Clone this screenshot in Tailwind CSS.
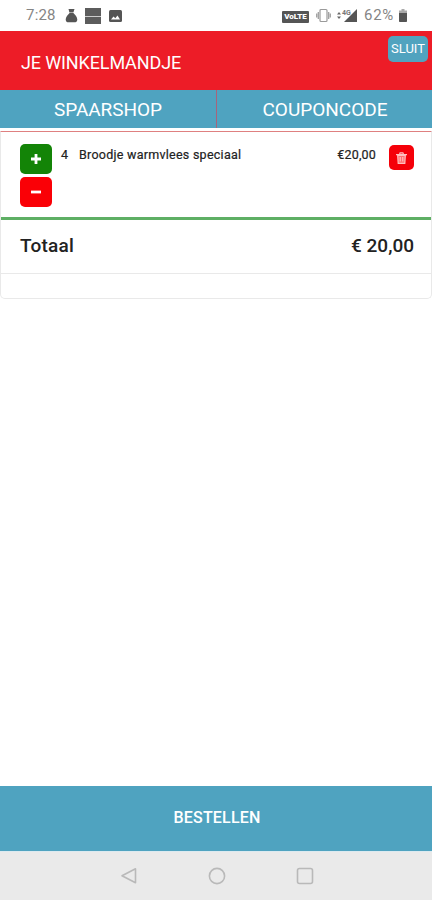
<!DOCTYPE html>
<html lang="nl">
<head>
<meta charset="utf-8">
<meta name="viewport" content="width=device-width, initial-scale=1">
<title>Je winkelmandje</title>
<script src="https://cdn.jsdelivr.net/npm/@tailwindcss/browser@4"></script>
</head>
<body class="bg-white">
<div class="w-[432px] h-[900px] flex flex-col overflow-hidden bg-white font-['Roboto',sans-serif] text-[#222]">
  <!-- Status bar -->
  <div class="h-[31px] shrink-0 flex items-center pl-[26px] pr-[24px] text-[#858585]">
    <span class="w-[39px] text-[15px] leading-none tracking-[0.2px]">7:28</span>
    <svg class="w-[13px] h-[15px]" viewBox="0 0 13 15" fill="#555"><path d="M3.500 1h6L8.400 4.400h-4zM4.600 5h3.800c1.800 1.800 3.900 4.200 3.900 6.400 0 2-1.200 2.900-3 2.900H3.700c-1.800 0-3-.9-3-2.900C.7 9.200 2.800 6.800 4.600 5z"/></svg>
    <svg class="ml-[7px] w-[16px] h-[16px]" viewBox="0 0 16 16"><path fill="#5c5c5c" d="M0 0h16v16H0z"/><path d="M0 8.500h16" stroke="#ccc" stroke-width="1"/></svg>
    <svg class="ml-[8px] mt-px w-[13px] h-[12px]" viewBox="0 0 13 12"><rect width="13" height="12" rx="1.500" fill="#555"/><path fill="#fff" d="M2 9.500l2.500-3 1.800 1.800L8.500 5.500 11 9.500z"/></svg>
    <div class="ml-auto mt-[2px] w-[27px] h-[12px] bg-[#555] text-white text-[8px] font-black leading-[12px] text-center rounded-[1px]">VoLTE</div>
    <svg class="ml-[7px] w-[15px] h-[15px]" viewBox="0 0 15 15" fill="none" stroke="#9a9a9a" stroke-width="1.200"><rect x="4" y="1.500" width="7" height="12" rx="1"/><path d="M2.300 4v7M12.700 4v7M.7 5.500v4M14.300 5.500v4"/></svg>
    <svg class="ml-[6px] w-[22px] h-[15px]" viewBox="0 0 22 15"><path fill="#555" d="M20 1v13H7z"/><path fill="#666" d="M0 6.500l2-2.500 2 2.500zM0 8.500h4L2 11z"/><text x="5" y="6.500" font-size="7" font-weight="700" fill="#777" font-family="Roboto">4G</text></svg>
    <span class="ml-[5px] w-[33px] text-[15px] leading-none tracking-[0.7px]">62%</span>
    <svg class="ml-[2px] mr-px w-[8px] h-[13px]" viewBox="0 0 8 13"><path fill="#aaa" d="M2.500 0h3v1.500H8V4H0V1.500h2.500z"/><path fill="#555" d="M0 4h8v8.200a.8.800 0 0 1-.8.800H.8a.8.800 0 0 1-.8-.8z"/></svg>
  </div>
  <!-- Header -->
  <header class="h-[59px] shrink-0 flex items-start justify-between bg-[#ed1c27] pl-[21px] pr-[4px] text-white">
    <h1 class="pt-[22px] text-[18px] leading-[20px] tracking-[-0.13px] whitespace-nowrap">JE WINKELMANDJE</h1>
    <button class="mt-[5px] w-[40px] h-[26px] rounded-[5px] bg-[#51a3bf] text-[13px] leading-[26px] text-center">SLUIT</button>
  </header>
  <!-- Tabs -->
  <nav class="h-[38px] shrink-0 flex bg-[#4fa3c0] text-white text-[19px] leading-[39px] text-center">
    <a class="w-[217px] border-r border-[#a6647c] tracking-[-0.05px]">SPAARSHOP</a>
    <a class="flex-1 pl-px">COUPONCODE</a>
  </nav>
  <!-- Basket -->
  <section class="mt-[3px] h-[168px] shrink-0 flex flex-col border border-t-[#df8080] border-[#e9e9e9] rounded-b-[5px]">
    <div class="h-[88px] box-border flex items-start border-b-3 border-[#5eaf64] pl-[19px] pr-[17px] pt-[12px]">
      <div class="flex flex-col gap-[3px]">
        <button class="w-[32px] h-[30px] rounded-[5px] bg-[#138407] flex items-center justify-center"><svg class="w-[12px] h-[12px]" viewBox="0 0 12 12"><path d="M6 1v10M1 6h10" stroke="#fff" stroke-width="2.800"/></svg></button>
        <button class="w-[32px] h-[30px] rounded-[5px] bg-[#fa0006] flex items-center justify-center"><svg class="w-[12px] h-[12px]" viewBox="0 0 12 12"><path d="M1 6h10" stroke="#fff" stroke-width="2.800"/></svg></button>
      </div>
      <span class="ml-[9px] w-[18px] pt-[2px] text-[12.5px] leading-[17px] [-webkit-text-stroke:0.2px_#222]">4</span>
      <span class="pt-[2px] text-[12.5px] leading-[17px] tracking-[0.26px] [-webkit-text-stroke:0.2px_#222] whitespace-nowrap">Broodje warmvlees speciaal</span>
      <span class="ml-auto pt-[2px] text-[12.5px] leading-[17px] tracking-[0.2px] [-webkit-text-stroke:0.2px_#222]">€20,00</span>
      <button class="ml-[13px] mt-px w-[25px] h-[25px] rounded-[5px] bg-[#f50009] flex items-center justify-center"><svg class="w-[11px] h-[12px]" viewBox="0 0 11 12"><path d="M3.500 2.500l.6-1.700h2.800l.6 1.700M0 2.600h11" fill="none" stroke="#ffc0c0" stroke-width="1.200"/><path d="M1.700 3.500l.5 7.800h6.600l.5-7.800z" fill="#ff7070" stroke="#ffc0c0" stroke-width="1.200"/><path d="M4.200 5v4.500M6.800 5v4.500" stroke="#ffd0d0"/></svg></button>
    </div>
    <div class="h-[54px] shrink-0 flex items-center justify-between border-b border-[#e9e9e9] pl-[19px] pr-[17px] text-[19px] font-medium">
      <span class="tracking-[0.2px]">Totaal</span>
      <span>€ 20,00</span>
    </div>
  </section>
  <!-- Order button -->
  <button class="mt-auto h-[65px] shrink-0 bg-[#4fa3c0] text-center text-white text-[16px] font-medium leading-[62px] tracking-[0.2px] pb-px pl-[2px]">BESTELLEN</button>
  <!-- Navigation bar -->
  <div class="h-[49px] shrink-0 border-t border-[#dceaf0] bg-[#eaeaea] flex items-center pl-[120px] gap-[70px]">
    <svg class="w-[18px] h-[18px]" viewBox="0 0 18 18" fill="none" stroke="#b9b9b9" stroke-width="1.600"><path d="M15.500 1.800v14L2 8.800z" stroke-linejoin="round"/></svg>
    <svg class="w-[18px] h-[18px]" viewBox="0 0 18 18" fill="none" stroke="#b9b9b9" stroke-width="1.600"><circle cx="9" cy="9" r="7.600"/></svg>
    <svg class="w-[18px] h-[18px]" viewBox="0 0 18 18" fill="none" stroke="#b9b9b9" stroke-width="1.600"><rect x="1.500" y="1.500" width="15" height="15" rx="2"/></svg>
  </div>
</div>
</body>
</html>
